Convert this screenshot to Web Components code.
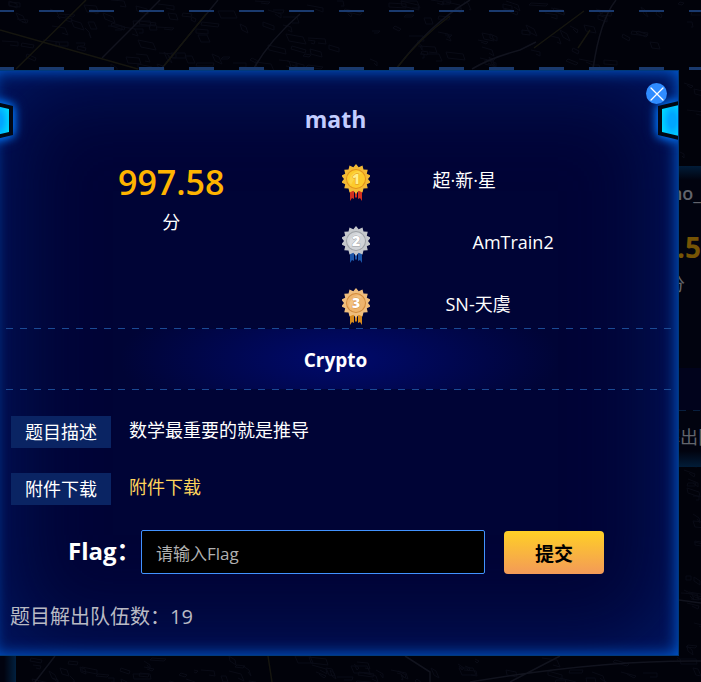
<!DOCTYPE html>
<html lang="zh-CN">
<head>
<meta charset="utf-8">
<title>math</title>
<style>
  html, body { margin: 0; min-height: 100%; background: #01020a; }
  body { font-family: "Open Sans", "Noto Sans CJK SC", sans-serif; color: #fff; font-size: 18px; overflow: hidden; }
</style>
</head>
<body>
<challenge-page></challenge-page>
<script>
const define = (name, html, setup) => {
  const tpl = document.createElement('template');
  tpl.innerHTML = html;
  customElements.define(name, class extends HTMLElement {
    constructor() {
      super();
      this.attachShadow({ mode: 'open' }).append(tpl.content.cloneNode(true));
    }
    connectedCallback() { if (setup) setup(this, this.shadowRoot); }
  });
};

/* Darkened city map with faint streets and building outlines */
define('city-map', `
<style>
  :host { display: block; overflow: hidden; }
  svg { display: block; width: 100%; height: 100%; }
</style>
<svg viewBox="0 0 701 682" preserveAspectRatio="xMinYMin slice" fill="none" aria-hidden="true">
  <g class="blocks" stroke="#090b16"></g>
  <g stroke="#11131e" stroke-width="1.5">
    <path d="M160 0L102 58M218 0L162 68M300 14Q270 40 254 68M470 0Q430 24 396 69M616 0Q600 20 593 69M472 69Q490 58 520 50L536 42M690 240L679 260M701 196L679 222M560 656L510 682M405 656L430 672V682M470 682Q600 660 701 661M55 656L35 682M679 600L701 603"/>
  </g>
  <g stroke="#15150f" stroke-width="1.5">
    <path d="M86 0L16 69M0 30L138 69M206 14L164 66M450 16Q420 38 396 69M584 11L534 48M590 30L578 48M268 656L272 682"/>
  </g>
</svg>`, (el, root) => {
  let d = '', s = 7;
  const r = n => (s = (s * 16807) % 2147483647) % n;
  const block = (x, y) => {
    const w = 4 + r(14), h = 2 + r(6), k = r(5);
    d += `M${x} ${y}l${w} ${k}l${h - 4} ${h}` + (r(2) ? `l${-w} ${-k}z` : `l${-(w >> 1)} ${-k}`);
  };
  for (let i = 0; i < 210; i++) {
    const x = r(700);
    block(x, i % 3 ? r(66) : 656 + r(26));
  }
  for (let i = 0; i < 50; i++) block(680 + r(16), 70 + r(580));
  const p = document.createElementNS('http://www.w3.org/2000/svg', 'path');
  p.setAttribute('d', d);
  root.querySelector('.blocks').append(p);
});

define('dash-line', `
<style>
  :host { display: block; height: var(--h, 1px);
    background: linear-gradient(90deg, var(--c, #1b4a94) 50%, transparent 50%) var(--x, 0) 0 / var(--p, 14px) 100% repeat-x; }
</style>`);

/* Neighbouring challenge card, dimmed by the overlay */
define('side-card', `
<style>
  :host { display: block; overflow: hidden; background: linear-gradient(#011c38, transparent 14px), linear-gradient(0deg, #011c38, transparent 16px), #01030f; }
  div { display: flex; justify-content: flex-end; white-space: nowrap; color: #62656d; }
  .name { height: 28px; padding-top: 13px; line-height: 28px; font-weight: 600; }
  .score { height: 40px; margin-top: 20px; line-height: 40px; font-size: 28px; font-weight: 700; color: #765405; }
  .unit { height: 24px; line-height: 24px; margin-top: 5px; justify-content: flex-start; }
  .unit span { margin-left: -12px; }
  .band { height: 42px; margin: 72px 0 0; background: #01031c; }
  .solved { height: 30px; line-height: 30px; margin: 11px 0 15px; justify-content: flex-start; }
  .solved span { margin-left: -17px; }
  dash-line { --c: #081f3e; }
</style>
<div class="name"><span>no_</span></div>
<div class="score"><span>.5</span></div>
<div class="unit"><span>分</span></div>
<div class="band"></div>
<dash-line></dash-line>
<div class="solved"><span>解出队</span></div>`);

/* Hexagonal side light; the "flip" attribute mirrors it */
define('edge-light', `
<style>
  :host { display: block; width: 22px; height: 40px; }
  :host([flip]) { transform: scaleX(-1); }
  svg { display: block; overflow: visible; filter: drop-shadow(0 0 5px #0078ff) drop-shadow(0 0 5px #0058c8); }
</style>
<svg width="22" height="40" viewBox="0 0 22 40" aria-hidden="true">
  <defs><radialGradient id="g" cx=".6" cy=".5" r=".7"><stop offset=".3" stop-color="#00a6ff"/><stop offset="1" stop-color="#00deff"/></radialGradient></defs>
  <path d="M1 5L22 0V39L1 34Z" fill="#020814"/>
  <path d="M5 8L22 4V35L5 31Z" fill="url(#g)"/>
</svg>`);

define('medal-icon', `
<style>
  :host { display: block; width: 28px; height: 38px; }
  svg { display: block; }
  text { font: 800 14px "Open Sans", sans-serif; }
</style>
<svg width="28" height="38" viewBox="0 0 28 38">
  <path class="ribbon" d="M8 24H12V35L10 34 8 37ZM16 24H20V37L18 34 16 35ZM13 24H15V33L14 34 13 33Z"/>
  <path class="burst"/>
  <circle class="rim" cx="14" cy="15" r="10"/>
  <circle class="face" cx="14" cy="15" r="9"/>
  <path class="shine" d="M7 18Q8 9 16 7L20 9Q12 13 9 21Z" opacity=".4"/>
  <text x="14" y="20" text-anchor="middle"></text>
</svg>`, (el, root) => {
  const rank = el.getAttribute('rank');
  const c = {
    1: ['#f3ba36', '#e2921a', '#fccb2c', '#ffe36b', '#fff08a', '#d2301f'],
    2: ['#c5c8cc', '#9da1a6', '#d0d3d7', '#eceef0', '#ffffff', '#1b55a8'],
    3: ['#efbd7c', '#d18a3c', '#eeb46d', '#f8d6a2', '#ffffff', '#d88a1c']
  }[rank];
  let d = '';
  for (let i = 0; i < 28; i++) {
    const a = i * Math.PI / 14 - Math.PI / 2, r = i % 2 ? 12 : 15;
    d += (i ? 'L' : 'M') + (14 + r * Math.cos(a)).toFixed(2) + ' ' + (15 + r * Math.sin(a)).toFixed(2);
  }
  const q = s => root.querySelector(s);
  q('.burst').setAttribute('d', d + 'Z');
  q('.burst').style.fill = c[0];
  q('.rim').style.fill = c[1];
  q('.face').style.fill = c[2];
  q('.shine').style.fill = c[3];
  q('text').style.cssText = `fill:${c[4]};stroke:${c[1]};stroke-width:.8px;paint-order:stroke`;
  q('text').textContent = rank;
  q('.ribbon').style.fill = c[5];
});

define('rank-row', `
<style>
  :host { display: flex; align-items: flex-start; height: 62px; }
  .name { padding-left: var(--indent); line-height: 32px; white-space: nowrap; }
</style>
<slot name="medal"></slot><span class="name"><slot></slot></span>`);

define('info-row', `
<style>
  :host { display: flex; align-items: flex-start; gap: 18px; }
  .tag { width: 100px; line-height: 32px; text-align: center; background: #0a2463; }
  .value { line-height: 28px; flex: 1; }
</style>
<span class="tag"><slot name="label"></slot></span><span class="value"><slot></slot></span>`);

define('flag-form', `
<style>
  :host { display: block; }
  form { display: flex; align-items: center; margin: 0; }
  label { width: 135px; padding-left: 62px; box-sizing: border-box; font-size: 24px; font-weight: 700; line-height: 42px; margin-bottom: 2px; white-space: nowrap; }
  input { flex: 1; min-width: 0; height: 44px; box-sizing: border-box; padding: 2px 14px 0; border: 1px solid #4293ff; border-radius: 2px; background: #000; color: #fff; font: inherit; font-size: 17px; outline: 0; }
  input::placeholder { color: #b0b0b0; opacity: 1; }
  button { width: 100px; height: 43px; margin: 1px 69px 0 19px; padding: 0; border: 0; border-radius: 4px; background: linear-gradient(#ffd026, #f39a58); color: #000; font: inherit; font-size: 19px; font-weight: 700; }
</style>
<form onsubmit="return false">
  <label for="flag">Flag：</label>
  <input id="flag" type="text" placeholder="请输入Flag">
  <button type="submit">提交</button>
</form>`);

define('challenge-dialog', `
<style>
  :host { display: grid; grid-template-columns: 1fr; position: relative; overflow: hidden; box-sizing: border-box; padding: 0 5px 23px 13px; border: 1px solid #003a7c;
    background: #000436; box-shadow: inset 0 0 16px #0062dc, inset 0 0 100px #001c6c; }
  h1 { margin: 31px 8px 0 0; text-align: center; font-size: 23px; line-height: 34px; font-weight: 700; color: #c3cdff; }
  .top { display: grid; grid-template-columns: 1fr 1fr; margin-top: 28px; padding-right: 6px; height: 164px; }
  .score { text-align: center; margin-top: -2px; }
  .score b { display: block; font-size: 34px; line-height: 40px; font-weight: 600; color: #ffb400; }
  .score span { line-height: 40px; }
  .ranks { padding-left: 5px; }
  .band { height: 60px; padding-right: 8px; display: flex; align-items: center; justify-content: center; background: radial-gradient(ellipse 220px 74px at center, #000a6c, transparent); }
  h2 { margin: 2px 0 0; font-size: 19px; line-height: 28px; font-weight: 700; }
  .info { display: grid; gap: 25px; padding: 26px 0 0 5px; }
  a { color: #ffd45c; text-decoration: none; }
  flag-form { margin-top: 25px; }
  p { margin: 28px 0 0 4px; font-size: 20px; line-height: 30px; color: #b9bac4; }
  .close { position: absolute; top: 12px; right: 11px; width: 21px; height: 21px; padding: 0; border: 0; background: none; }
  .close svg { display: block; }
  edge-light { position: absolute; top: 30px; right: -1px; }
  edge-light[flip] { right: auto; left: -1px; }
</style>
<edge-light flip></edge-light><edge-light></edge-light>
<h1>math</h1>
<div class="top">
  <div class="score"><b>997.58</b><span>分</span></div>
  <div class="ranks">
    <rank-row style="--indent:63px"><medal-icon slot="medal" rank="1"></medal-icon>超·新·星</rank-row>
    <rank-row style="--indent:103px"><medal-icon slot="medal" rank="2"></medal-icon>AmTrain2</rank-row>
    <rank-row style="--indent:76px"><medal-icon slot="medal" rank="3"></medal-icon>SN-天虞</rank-row>
  </div>
</div>
<dash-line></dash-line>
<div class="band"><h2>Crypto</h2></div>
<dash-line></dash-line>
<div class="info">
  <info-row><span slot="label">题目描述</span>数学最重要的就是推导</info-row>
  <info-row><span slot="label">附件下载</span><a href="#download">附件下载</a></info-row>
</div>
<flag-form></flag-form>
<p>题目解出队伍数：19</p>
<button class="close" type="button" aria-label="关闭">
  <svg width="21" height="21" viewBox="0 0 21 21"><circle cx="10.5" cy="10.5" r="10.5" fill="#2f8cff"/><path d="M5 5L17 17M17 5L5 17" stroke="#fff" stroke-width="1.3" stroke-linecap="round"/></svg>
</button>`);

define('challenge-page', `
<style>
  :host { display: grid; grid-template: auto / 100%; min-height: 100vh; overflow: hidden; }
  city-map, .back, .front { grid-area: 1 / 1; min-height: 0; }
  city-map { height: 100vh; }
  .back { display: grid; grid-template: 10px 2px 55px 3px 96px auto 1fr / 1fr 22px; height: 100vh; }
  .back dash-line { grid-column: 1 / 3; --c: #1a3a6e; --p: 50px; --x: -11px; --h: auto; }
  .d1 { grid-row: 2; }
  .d2 { grid-row: 4; }
  side-card { grid-area: 6 / 2; align-self: start; }
  .prev { grid-area: 7 / 1; align-self: end; width: 16px; height: 40px; background: linear-gradient(270deg, #01203f, transparent 12px), #01030f; }
  .front { padding: 70px 22px 0 0; margin-left: -8px; position: relative; }
</style>
<city-map></city-map>
<div class="back">
  <dash-line class="d1"></dash-line>
  <dash-line class="d2"></dash-line>
  <side-card></side-card>
  <div class="prev"></div>
</div>
<div class="front"><challenge-dialog role="dialog" aria-label="math"></challenge-dialog></div>`);
</script>
</body>
</html>
